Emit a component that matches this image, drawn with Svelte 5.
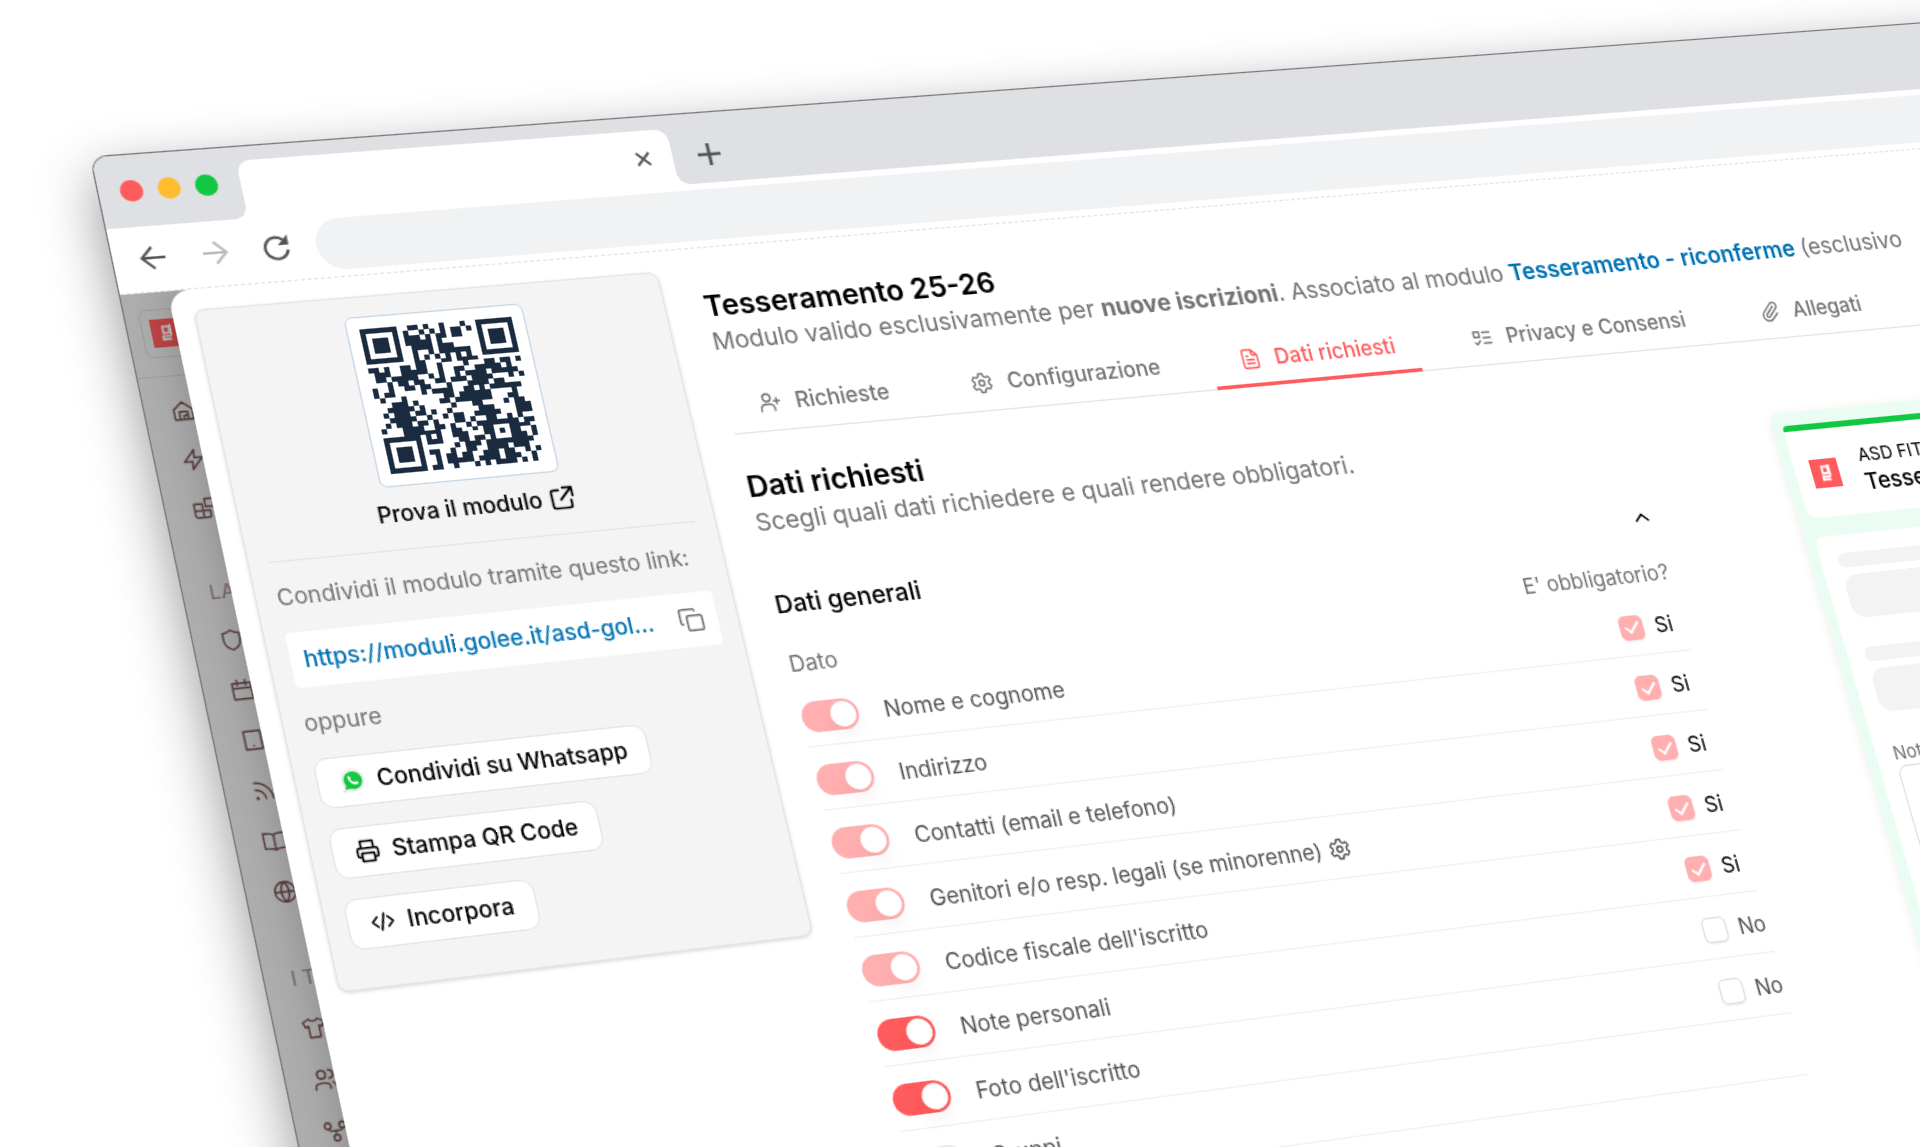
<script lang="ts">
	type Field = { label: string; on: boolean; locked: boolean; required: boolean | null; gear?: boolean };

	const fields: Field[] = $state([
		{ label: 'Nome e cognome', on: true, locked: true, required: true },
		{ label: 'Indirizzo', on: true, locked: true, required: true },
		{ label: 'Contatti (email e telefono)', on: true, locked: true, required: true },
		{ label: 'Genitori e/o resp. legali (se minorenne)', on: true, locked: true, required: true, gear: true },
		{ label: "Codice fiscale dell'iscritto", on: true, locked: true, required: true },
		{ label: 'Note personali', on: true, locked: false, required: false },
		{ label: "Foto dell'iscritto", on: true, locked: false, required: false },
		{ label: 'Gruppi', on: false, locked: false, required: null }
	]);

	const tabs = [
		{ label: 'Richieste', icon: 'user-plus' },
		{ label: 'Configurazione', icon: 'gear' },
		{ label: 'Dati richiesti', icon: 'file' },
		{ label: 'Privacy e Consensi', icon: 'list' },
		{ label: 'Allegati', icon: 'clip' }
	];
	let active = $state('Dati richiesti');

	const nav = [
		{ title: '', items: ['home', 'bolt', 'blocks'] },
		{ title: 'LA', items: ['shield', 'calendar', 'tablet', 'rss', 'book', 'globe'] },
		{ title: 'I T', items: ['shirt', 'users', 'nodes', 'file'] }
	];

	// stroke icons on a 24 grid
	const icons: Record<string, string> = {
		home: 'M3 10.500 12 3l9 7.500V21H3zM8 21v-8h8v8M12 17v4M12 17h4',
		bolt: 'M14 2 3 14h8l-1 8L21 10h-8z',
		blocks: 'M3 7h8v14H5a2 2 0 0 1-2-2zM3 14h15v5a2 2 0 0 1-2 2H11M11 14h7M14 2h8v8h-8z',
		shield: 'M12 2c3 2.500 5.500 3 8 3v7c0 5-3.500 8-8 10-4.500-2-8-5-8-10V5c2.500 0 5-.5 8-3z',
		calendar: 'M3 5h18v16H3zM3 10h18M8 2v5M16 2v5',
		tablet: 'M4 3h16v18H4zM12 17.500v.1',
		rss: 'M4 11a9 9 0 0 1 9 9M4 4a16 16 0 0 1 16 16M5 18.500a.8.8 0 1 0 .1 0z',
		book: 'M12 6C10 4 7 4 2 4v15c5 0 8 0 10 2 2-2 5-2 10-2V4c-5 0-8 0-10 2zM12 6v15',
		globe: 'M12 2a10 10 0 1 0 0 20 10 10 0 0 0 0-20zM2 12h20M12 2c-5 5-5 15 0 20M12 2c5 5 5 15 0 20',
		shirt: 'M8 3 2 6l2 5 3-1v11h10V10l3 1 2-5-6-3c-1 3-7 3-8 0z',
		users: 'M9 3a4 4 0 1 0 0 8 4 4 0 0 0 0-8zM2 21v-2c0-5 14-5 14 0v2M16 3a4 4 0 0 1 0 8M19 15c2 1 3 2 3 5',
		nodes: 'M5 3a3 3 0 1 0 0 6 3 3 0 0 0 0-6zM19 3a3 3 0 1 0 0 6 3 3 0 0 0 0-6zM12 15a3 3 0 1 0 0 6 3 3 0 0 0 0-6zM5 9c0 3 14 3 14 0M12 11v4',
		'user-plus': 'M9 3a4 4 0 1 0 0 8 4 4 0 0 0 0-8zM2 21v-2a5 5 0 0 1 5-5h4a5 5 0 0 1 5 5v2M19 8v6M16 11h6',
		gear: 'M12 9a3 3 0 1 0 0 6 3 3 0 0 0 0-6zM10 2h4l.7 3 2 1.200 3-.9 2 3.400-2.300 2.100v2.400l2.300 2.100-2 3.400-3-.9-2 1.200-.7 3h-4l-.7-3-2-1.200-3 .9-2-3.400 2.300-2.100v-2.400L2.300 8.700l2-3.400 3 .9 2-1.200z',
		file: 'M14 2H6a2 2 0 0 0-2 2v16a2 2 0 0 0 2 2h12a2 2 0 0 0 2-2V8zM14 2v4a2 2 0 0 0 2 2h4M8 9h2M8 13h8M8 17h8',
		list: 'M3 5h6v6H3zM3 17l2 2 4-4M13 6h8M13 12h8M13 18h8',
		clip: 'm16 6-8.400 8.600a2 2 0 0 0 2.800 2.800l8.400-8.600a4 4 0 1 0-5.600-5.600l-8.400 8.600a6 6 0 1 0 8.500 8.500L20 14',
		external: 'M14 2h8v8M22 2 11 13M10 4H5a2 2 0 0 0-2 2v13a2 2 0 0 0 2 2h13a2 2 0 0 0 2-2v-5',
		copy: 'M10 8h10a2 2 0 0 1 2 2v10a2 2 0 0 1-2 2H10a2 2 0 0 1-2-2V10a2 2 0 0 1 2-2zM4 16a2 2 0 0 1-2-2V4a2 2 0 0 1 2-2h10a2 2 0 0 1 2 2',
		print: 'M6 18H4a2 2 0 0 1-2-2v-5a2 2 0 0 1 2-2h16a2 2 0 0 1 2 2v5a2 2 0 0 1-2 2h-2M6 9V2h12v7M6 14h12v8H6z',
		code: 'm17 17 5-5-5-5M7 7l-5 5 5 5M14 4l-4 16',
		chevron: 'm6 15 6-6 6 6'
	};

	const qr = [
		'00000000011010010001000000000',
		'00000000100101010110100000000',
		'00000000111010110110000000000',
		'00000000111110100000000000000',
		'00000000011110111000000000000',
		'00000000010010111111000000000',
		'00000000010101010101000000000',
		'00000000011000110111100000000',
		'11010011011001000010001101101',
		'01110011111001001100111110100',
		'01101111100101001011110111110',
		'00010110110011011101111000101',
		'10010011011000100011110110000',
		'10110000010111100110101111110',
		'01000100000001101111110000100',
		'00011101000011011111110001100',
		'00111110100000100011000010110',
		'01011101101001000001110000111',
		'00111110010010110011111000111',
		'01011101101000110100110010100',
		'10001111001101001011111111011',
		'00001111111001100101100011110',
		'10000000101001110001101011001',
		'00000000111000110110100011101',
		'00000000000001011101111111110',
		'00000000110010011001111011100',
		'00000000010110110011101100101',
		'00000000010111110111101110010',
		'00000000110010001010111101010'
	];
	const qrPath = qr.flatMap((row, r) => [...row].map((m, c) => (m === '1' ? `M${c} ${r}h1v1h-1z` : ''))).join('');
</script>

{#snippet icon(name: string, size = 18, stroke = 2)}
	<svg
		class="icon"
		aria-hidden="true"
		width={size}
		height={size}
		viewBox="0 0 24 24"
		fill="none"
		stroke="currentColor"
		stroke-width={stroke}
		stroke-linecap="round"
		stroke-linejoin="round"
	>
		<path d={icons[name]} />
	</svg>
{/snippet}

{#snippet logo(size: number)}
	<svg class="icon" aria-hidden="true" width={size} height={size} viewBox="0 0 24 24">
		<path fill="#ff5a5c" d="M0 0h24v24H0z" />
		<path fill="none" stroke="#fff" stroke-width="1.800" d="M14.500 6.500h-5v5.500h5zM15.500 5v9.500M8.500 14.500l7 .5M8.500 17l7 .5M9 14.500v4" />
	</svg>
{/snippet}

<div class="stage">
	<div class="window">
		<header class="tabbar">
			<span class="light red"></span>
			<span class="light yellow"></span>
			<span class="light green"></span>
			<div class="tab">
				<button class="plain" aria-label="Chiudi scheda">
					<svg width="12" height="12" viewBox="0 0 12 12" stroke="currentColor" stroke-width="1.800"><path d="m1 1 10 10M11 1 1 11" /></svg>
				</button>
			</div>
			<button class="plain new" aria-label="Nuova scheda">
				<svg width="18" height="18" viewBox="0 0 18 18" stroke="currentColor" stroke-width="2.600"><path d="M9 0v18M0 9h18" /></svg>
			</button>
		</header>
		<div class="toolbar">
			<button class="plain" aria-label="Indietro">
				<svg width="20" height="20" viewBox="0 0 20 20" fill="none" stroke="currentColor" stroke-width="2"><path d="M19 10H2M10 1.500 1.500 10l8.500 8.500" /></svg>
			</button>
			<button class="plain off" aria-label="Avanti">
				<svg width="20" height="20" viewBox="0 0 20 20" fill="none" stroke="currentColor" stroke-width="2"><path d="M1 10h17M10 1.500l8.500 8.500-8.500 8.500" /></svg>
			</button>
			<button class="plain" aria-label="Ricarica">
				<svg width="20" height="20" viewBox="0 0 20 20" fill="none" stroke="currentColor" stroke-width="2.200">
					<path d="M18.500 12A8.500 8.500 0 1 1 16 4" />
					<path d="M19.500 0v8h-8z" fill="currentColor" stroke="none" />
				</svg>
			</button>
			<input class="address" type="text" aria-label="Indirizzo web" />
		</div>

		<div class="page">
			<nav class="sidebar" aria-label="Menu">
				<div class="org">{@render logo(22)}</div>
				<div class="groups">
					{#each nav as group}
						{#if group.title}<p>{group.title}</p>{/if}
						{#each group.items as item}
							<a href="#{item}" aria-label={item}>{@render icon(item, 18, 1.8)}</a>
						{/each}
					{/each}
				</div>
			</nav>

			<div class="modal">
				<aside class="card">
					<div class="qr">
						<svg viewBox="0 0 29 29" preserveAspectRatio="none" fill="#1a2a3f" shape-rendering="crispEdges" role="img" aria-label="QR code">
							{#each [[0, 0], [22, 0], [0, 22]] as [x, y]}
								<path fill-rule="evenodd" d="M{x} {y}h7v7h-7zM{x + 1} {y + 1}v5h5v-5zM{x + 2} {y + 2}h3v3h-3z" />
							{/each}
							<path d={qrPath} />
						</svg>
					</div>
					<a class="try" href="#prova">Prova il modulo {@render icon('external', 20)}</a>
					<hr />
					<p>Condividi il modulo tramite questo link:</p>
					<div class="link">
						<a href="#modulo">https://moduli.golee.it/asd-gol...</a>
						<button class="plain" aria-label="Copia link">{@render icon('copy', 20, 1.8)}</button>
					</div>
					<p>oppure</p>
					<button class="action">
						<svg class="icon" aria-hidden="true" width="18" height="18" viewBox="0 0 24 24">
							<path fill="#fff" stroke="#ddd" d="M2 22.500 3.500 17A10.500 10.500 0 1 1 8 21z" />
							<path fill="#12c842" d="M3.500 20.700 4.800 16.500A9 9 0 1 1 8 19.500z" />
							<path fill="#fff" d="M8.600 6.500c-2.800 2 1.500 10.500 7 9.500 2-.6 2-2.200 1.600-2.500l-2.200-1c-1 .2-1 1.200-1.600 1.200-1.600-.7-2.600-1.700-3.300-3.200.1-.6 1-.8.9-1.500z" />
						</svg>
						Condividi su Whatsapp
					</button>
					<button class="action">{@render icon('print')} Stampa QR Code</button>
					<button class="action">{@render icon('code')} Incorpora</button>
				</aside>

				<main>
					<h1>Tesseramento 25-26</h1>
					<p class="lead">
						Modulo valido esclusivamente per <b>nuove iscrizioni</b>. Associato al modulo
						<a href="#riconferme">Tesseramento - riconferme</a> (esclusivo
					</p>
					<div class="tabs" role="tablist">
						{#each tabs as tab}
							<button role="tab" class:active={active === tab.label} aria-selected={active === tab.label} onclick={() => (active = tab.label)}>
								{@render icon(tab.icon, 18, 1.8)}
								{tab.label}
							</button>
						{/each}
					</div>

					<div class="columns">
						<section>
							<h2>Dati richiesti</h2>
							<p class="lead">Scegli quali dati richiedere e quali rendere obbligatori.</p>
							<div class="group">
								<h3>Dati generali</h3>
								<button class="plain" aria-label="Comprimi">{@render icon('chevron', 20)}</button>
							</div>
							<table>
								<thead>
									<tr><th>Dato</th><th class="end">E' obbligatorio?</th></tr>
								</thead>
								<tbody>
									{#each fields as field}
										<tr>
											<td>
												<label class="field">
													<input class="switch" type="checkbox" role="switch" bind:checked={field.on} disabled={field.locked} />
													<span>{field.label}</span>
													{#if field.gear}{@render icon('gear', 18, 1.8)}{/if}
												</label>
											</td>
											<td class="need">
												{#if field.required !== null}
													<label class:on={field.required}>
														<input class="tick" type="checkbox" bind:checked={field.required} disabled={field.locked} />
														{field.required ? 'Si' : 'No'}
													</label>
												{/if}
											</td>
										</tr>
									{/each}
								</tbody>
							</table>
						</section>

						<div class="preview">
							<div class="preview-head">
								{@render logo(24)}
								<div>
									<small>ASD FIT</small>
									<strong>Tesseramento</strong>
								</div>
							</div>
							<div class="preview-body">
								<i class="bar"></i><i class="block"></i>
								<i class="bar"></i><i class="block"></i>
								<label for="note">Note</label>
								<textarea id="note"></textarea>
							</div>
						</div>
					</div>
				</main>
			</div>
		</div>
	</div>
</div>

<style>
	:global(body) {
		margin: 0;
		background: #fff;
	}
	.stage {
		height: 100vh;
		overflow: hidden;
		font: 400 17px/24px Inter, 'Liberation Sans', sans-serif;
		color: #000;
	}
	.stage :global(*) {
		box-sizing: border-box;
	}
	/* the whole browser window is tilted in one projection */
	.window {
		display: flex;
		flex-direction: column;
		width: 84vw;
		min-width: 1600px;
		min-height: 1000px;
		background: #fff;
		border-radius: 12px 12px 0 0;
		box-shadow: 0 0 0 1px #777, 0 16px 44px rgb(0 0 0 / 45%);
		transform-origin: 0 0;
		transform: matrix3d(1.355254, -0.0869312, 0, 0.0000752, 0.259167, 1.24592, 0, -0.00005845, 0, 0, 1, 0, 91, 157.5, 0, 1);
	}
	h1, h2, h3, p, hr { margin: 0; }
	a { color: inherit; text-decoration: none; }
	button, input, textarea { font: inherit; color: inherit; margin: 0; }
	.icon { flex: none; display: block; }
	.plain {
		display: flex;
		flex: none;
		padding: 0;
		border: 0;
		background: none;
	}

	.tabbar {
		display: flex;
		align-items: center;
		gap: 11px;
		height: 57px;
		padding-left: 16px;
		background: #dfe0e4;
		border-radius: 12px 12px 0 0;
		color: #55565a;
	}
	.light { width: 17px; height: 17px; border-radius: 50%; }
	.red { background: #ff5a5c; }
	.yellow { background: #ffbc2e; }
	.green { background: #12c842; }
	.tab {
		position: relative;
		align-self: flex-end;
		display: flex;
		align-items: center;
		justify-content: flex-end;
		width: 332px;
		height: 46px;
		margin-left: 6px;
		padding-right: 17px;
		background: #fff;
		border-radius: 10px 10px 0 0;
	}
	.tab::before, .tab::after {
		content: '';
		position: absolute;
		bottom: 0;
		width: 10px;
		height: 10px;
	}
	.tab::before { right: 100%; background: radial-gradient(circle at 0 0, transparent 10px, #fff 10px); }
	.tab::after { left: 100%; background: radial-gradient(circle at 100% 0, transparent 10px, #fff 10px); }
	.new { margin: 10px 0 0 9px; }
	.toolbar {
		display: flex;
		align-items: center;
		gap: 26px;
		height: 52px;
		padding: 0 8px 1px 20px;
		border-bottom: 1px dashed #e2e2e2;
		color: #55565a;
	}
	.toolbar .off { color: #b9babc; }
	.address {
		flex: 1;
		height: 41px;
		margin-left: -6px;
		border: 0;
		border-radius: 21px;
		background: #f1f2f3;
	}

	.page {
		flex: 1;
		display: flex;
		background: #aeadad;
	}
	.sidebar {
		flex: none;
		width: 35px;
		color: #5b4040;
		white-space: nowrap;
	}
	.org {
		width: 200px;
		height: 38px;
		margin: 13px 0 14px 10px;
		padding: 7px 6px;
		border: 1px solid #a09f9f;
		border-radius: 6px;
	}
	.org .icon { filter: brightness(0.75); }
	.groups {
		display: flex;
		flex-direction: column;
		padding: 8px 0 0 19px;
		border-top: 1px solid #a09f9f;
	}
	.groups a {
		display: flex;
		align-items: center;
		height: 38px;
	}
	.groups p {
		padding: 37px 0 10px;
		font-size: 15px;
		line-height: 16px;
		color: #7b6666;
	}
	.modal {
		position: relative;
		flex: 1;
		display: flex;
		align-items: flex-start;
		align-self: stretch;
		gap: 30px;
		min-width: 0;
		padding: 16px;
		background: #fff;
		border-radius: 16px 0 0 0;
		box-shadow: 0 0 30px rgb(0 0 0 / 22%);
		clip-path: inset(0 0 0 -36px);
	}

	.card {
		flex: none;
		display: flex;
		flex-direction: column;
		align-items: flex-start;
		gap: 15px;
		width: 354px;
		padding: 15px 15px 28px;
		border: 1px solid #e4e4e4;
		border-radius: 8px;
		background: #f4f4f4;
		box-shadow: 0 1px 3px rgb(0 0 0 / 16%);
		color: #737373;
	}
	.qr {
		align-self: center;
		display: flex;
		width: 136px;
		height: 134px;
		margin-bottom: -6px;
		padding: 9px;
		border: 1px solid #c4d6e6;
		border-radius: 6px;
		background: #fff;
	}
	.qr svg { width: 100%; height: 100%; }
	.try {
		align-self: center;
		display: flex;
		align-items: center;
		gap: 5px;
		font-weight: 500;
		color: #000;
	}
	hr {
		align-self: stretch;
		height: 1px;
		border: 0;
		background: #e4e4e4;
	}
	.link {
		align-self: stretch;
		display: flex;
		align-items: center;
		justify-content: space-between;
		height: 42px;
		padding: 0 10px;
		border-radius: 4px;
		background: #fff;
	}
	.link a { font-weight: 500; color: #0072b3; }
	.action {
		display: flex;
		align-items: center;
		gap: 9px;
		height: 38px;
		padding: 0 16px;
		border: 1px solid #e4e4e4;
		border-radius: 10px;
		background: #fff;
		font-weight: 500;
		color: #000;
	}

	main {
		flex: 1;
		min-width: 0;
		padding-top: 15px;
		white-space: nowrap;
	}
	h1, h2 {
		font-size: 23px;
		font-weight: 600;
		line-height: 32px;
	}
	h3 { font-size: 19px; font-weight: 500; line-height: 28px; }
	.lead { font-size: 19px; line-height: 26px; color: #737373; }
	.lead b { font-weight: 700; }
	.lead a { font-weight: 600; color: #0072b3; }
	.tabs {
		display: flex;
		gap: 24px;
		margin-top: 17px;
		border-bottom: 1px solid #e2e2e2;
	}
	.tabs button {
		display: flex;
		align-items: center;
		gap: 11px;
		height: 44px;
		margin-bottom: -1px;
		padding: 1px 18px 0 24px;
		border: 0;
		border-bottom: 3px solid transparent;
		background: none;
		font-weight: 500;
		color: #737373;
	}
	.tabs .active {
		border-color: #ff5a5c;
		color: #ff5a5c;
	}
	.columns {
		display: grid;
		grid-template-columns: 720px 1fr;
		gap: 124px;
		align-items: start;
	}
	section { padding-top: 26px; }
	.group {
		display: flex;
		align-items: center;
		justify-content: space-between;
		margin: 38px 0 14px;
	}
	table {
		width: 100%;
		border-collapse: collapse;
	}
	th {
		height: 33px;
		padding: 2px 0 0;
		font-weight: 400;
		text-align: left;
		color: #737373;
	}
	.end { text-align: right; }
	td {
		height: 49px;
		padding: 5px 0 0;
		border-bottom: 1px solid #f0f0f0;
	}
	.field {
		display: flex;
		align-items: center;
		color: #525252;
	}
	.field span { margin: 0 6px 0 20px; }
	.switch {
		appearance: none;
		display: flex;
		width: 44px;
		height: 24px;
		padding: 2px;
		border-radius: 12px;
		background: #e5e5e5;
	}
	.switch::before {
		content: '';
		width: 20px;
		height: 20px;
		border-radius: 50%;
		background: #fff;
		box-shadow: 0 8px 14px rgb(0 0 0 / 5%);
	}
	.switch:checked { justify-content: flex-end; background: #ff5a5c; }
	.switch:disabled { background: #ffafb0; }
	.need { width: 54px; }
	.need label {
		display: flex;
		align-items: center;
		gap: 10px;
		margin-left: auto;
		width: 54px;
		color: #525252;
	}
	.need .on { color: #000; }
	.tick {
		appearance: none;
		display: grid;
		place-items: center;
		flex: none;
		width: 20px;
		height: 20px;
		border: 1px solid #dcdcdc;
		border-radius: 5px;
		background: #fff;
		box-shadow: 0 1px 2px rgb(0 0 0 / 8%);
	}
	.tick:checked { border-color: #ffafb0; background: #ffafb0; }
	.tick:checked::before {
		content: '';
		width: 5px;
		height: 10px;
		margin-bottom: 3px;
		border: solid #fff;
		border-width: 0 2px 2px 0;
		transform: rotate(42deg);
	}

	.preview {
		min-height: 700px;
		margin-top: 62px;
		margin-left: -2px;
		padding: 11px 9px;
		border-radius: 8px;
		background: #ebfdf2;
		box-shadow: 0 2px 8px rgb(0 0 0 / 8%);
	}
	.preview-head {
		display: flex;
		align-items: center;
		gap: 20px;
		height: 78px;
		padding: 0 14px;
		border-top: 5px solid #12c842;
		border-radius: 4px 4px 8px 8px;
		background: #fff;
	}
	.preview-head small, .preview-head strong { display: block; }
	.preview-head small { font-size: 15px; line-height: 22px; }
	.preview-head strong { font-size: 19px; font-weight: 500; }
	.preview-body {
		display: flex;
		flex-direction: column;
		min-height: 560px;
		margin-top: 16px;
		padding: 15px;
		border-radius: 8px;
		background: #fff;
		font-size: 15px;
		line-height: 20px;
		color: #737373;
	}
	.bar {
		height: 12px;
		margin-bottom: 6px;
		border-radius: 6px;
		background: #f3f3f3;
	}
	.block {
		height: 36px;
		margin-bottom: 24px;
		border-radius: 12px;
		background: #f3f3f3;
	}
	textarea {
		height: 120px;
		border: 1px solid #dcdcdc;
		border-radius: 8px;
		background: #fff;
		resize: none;
	}
</style>
